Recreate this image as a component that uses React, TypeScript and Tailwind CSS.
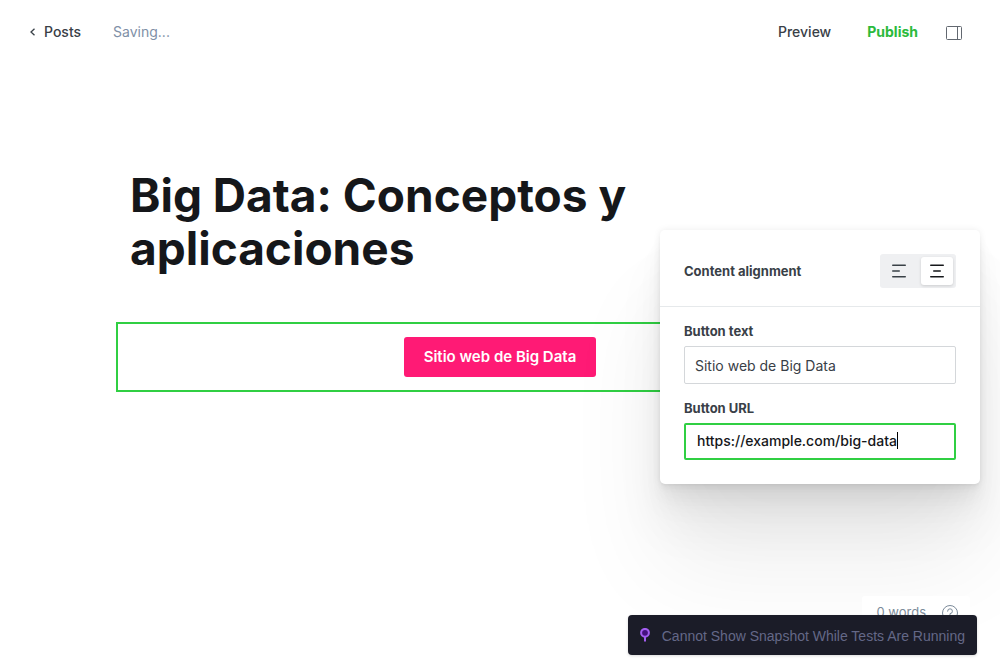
import { useState } from "react";

type Alignment = "left" | "center";

function SidebarIcon() {
  return (
    <svg width="16" height="16" viewBox="0 0 16 16" fill="none" stroke="#626870" aria-hidden="true">
      <rect x="0.5" y="1.5" width="15" height="13" rx="1" />
      <path d="M11.5 1.5v13" />
    </svg>
  );
}

function AlignIcon({ align }: { align: Alignment }) {
  return (
    <svg width="14" height="14" viewBox="0 0 14 14" fill="none" stroke="currentColor" strokeWidth="1.5" strokeLinecap="round" aria-hidden="true">
      <path d="M0.75 1.25h12.5M0.75 12.75h12.5" />
      <path d={align === "left" ? "M0.75 7h6.5" : "M3.75 7h6.5"} />
    </svg>
  );
}

function Header() {
  return (
    <header className="flex items-center justify-between pt-4 pr-[38px] pl-[30px] text-sm">
      <div className="flex items-center gap-8">
        <a href="#posts" className="flex h-8 items-center gap-[9px] font-medium text-[#394047]">
          <svg width="5" height="8" viewBox="0 0 5 8" fill="none" stroke="#394047" strokeWidth="1.3" aria-hidden="true">
            <path d="M4.5 0.7 1 4l3.5 3.3" />
          </svg>
          Posts
        </a>
        <span className="text-[#8090a7]">Saving...</span>
      </div>
      <div className="flex items-center">
        <button type="button" className="h-8 font-medium text-[#394047]">Preview</button>
        <button type="button" className="ml-9 h-8 font-bold text-[#2bba3c]">Publish</button>
        <button type="button" aria-label="Settings" className="ml-7 flex h-8 items-center pt-px">
          <SidebarIcon />
        </button>
      </div>
    </header>
  );
}

function AlignButton({ align, active, onSelect }: { align: Alignment; active: boolean; onSelect: () => void }) {
  return (
    <button
      type="button"
      aria-label={`Align ${align}`}
      aria-pressed={active}
      onClick={onSelect}
      className={
        active
          ? "flex h-7 w-8 items-center justify-center rounded-[3px] bg-white text-[#15171a] shadow-[0_1px_3px_rgba(0,0,0,0.15)]"
          : "flex h-7 w-8 items-center justify-center rounded-[3px] text-[#394047]"
      }
    >
      <AlignIcon align={align} />
    </button>
  );
}

function SettingsPanel({ text, onText }: { text: string; onText: (value: string) => void }) {
  const [align, setAlign] = useState<Alignment>("center");
  const [url, setUrl] = useState("https://example.com/big-data");
  return (
    <aside className="absolute top-[230px] right-5 w-80 rounded-[5px] bg-white text-[13px] font-bold text-[#394047] shadow-[0_0_7px_rgba(0,0,0,0.08),0_2px_2px_rgba(0,0,0,0.02),0_7px_5px_rgba(0,0,0,0.02),0_12px_17px_rgba(0,0,0,0.03),0_22px_27px_rgba(0,0,0,0.04),0_42px_50px_rgba(0,0,0,0.05),0_80px_100px_rgba(0,0,0,0.07)]">
      <div className="flex items-center justify-between border-b border-[#e6e9eb] px-6 pt-6 pb-[18px]">
        <span className="pt-0.5">Content alignment</span>
        <div className="flex gap-[6px] rounded-[3px] bg-[#eff0f2] p-[3px]">
          <AlignButton align="left" active={align === "left"} onSelect={() => setAlign("left")} />
          <AlignButton align="center" active={align === "center"} onSelect={() => setAlign("center")} />
        </div>
      </div>
      <div className="flex flex-col px-6 pt-[15px] pb-6">
        <label htmlFor="button-text" className="leading-[18px]">Button text</label>
        <input
          id="button-text"
          value={text}
          onChange={(e) => onText(e.target.value)}
          className="mt-[6px] h-[38px] rounded-[2px] border border-[#d4d7da] px-[10px] pt-px text-sm font-normal text-[#394047] outline-none"
        />
        <label htmlFor="button-url" className="mt-[15px] leading-[18px]">Button URL</label>
        <div className="relative mt-[6px] flex">
          <input
            id="button-url"
            value={url}
            onChange={(e) => setUrl(e.target.value)}
            className="h-[37px] w-full rounded-[2px] border-2 border-[#30cf43] px-[11px] pb-0.5 text-sm font-medium text-[#15171a] outline-none"
          />
          <span aria-hidden="true" className="absolute top-[9px] left-[213px] h-[17px] w-px bg-black" />
        </div>
      </div>
    </aside>
  );
}

function WordCount() {
  return (
    <div className="absolute right-[30px] bottom-8 flex h-8 items-center gap-4 rounded-[3px] bg-white pt-px pr-3 pl-[14px] text-[13px] text-[#7c8b9a]">
      <span className="whitespace-nowrap">0 words</span>
      <svg width="16" height="16" viewBox="0 0 16 16" fill="none" stroke="currentColor" aria-hidden="true">
        <circle cx="8" cy="8" r="7.5" />
        <path d="M5.6 6.2A2.4 2.4 0 1 1 8 8.6v1.6" strokeLinecap="round" />
        <circle cx="8" cy="12" r="0.4" />
      </svg>
    </div>
  );
}

function SnapshotNotice() {
  return (
    <div role="status" className="absolute right-[23px] bottom-[5px] flex h-10 items-center gap-3 rounded-[4px] bg-[#1b1c28] px-3 font-['Liberation_Sans',sans-serif] text-sm whitespace-nowrap text-[#646887] shadow-[0_1px_3px_rgba(0,0,0,0.15)]">
      <svg width="10" height="14" viewBox="0 0 10 14" fill="none" aria-hidden="true">
        <path d="M5 8.5V13.5" stroke="#a35df0" strokeWidth="2" />
        <circle cx="5" cy="4.8" r="3.9" fill="#45117e" stroke="#a35df0" strokeWidth="2" />
      </svg>
      <span className="pt-0.5">Cannot Show Snapshot While Tests Are Running</span>
    </div>
  );
}

export default function App() {
  const [text, setText] = useState("Sitio web de Big Data");
  return (
    <div className="relative min-h-screen overflow-hidden bg-white font-['Inter',sans-serif] text-[#15171a]">
      <Header />
      <main className="mx-auto w-full max-w-[768px] pt-[121px]">
        <h1 className="px-[14px] text-[46px] leading-[53px] font-bold">Big Data: Conceptos y aplicaciones</h1>
        <div className="mt-[47px] flex justify-center border-2 border-[#30cf43] py-[13px]">
          <a href="https://example.com/big-data" className="flex h-10 items-center rounded-[3px] bg-[#ff1a75] px-5 text-[15px] font-semibold text-white">
            {text}
          </a>
        </div>
      </main>
      <SettingsPanel text={text} onText={setText} />
      <WordCount />
      <SnapshotNotice />
    </div>
  );
}
